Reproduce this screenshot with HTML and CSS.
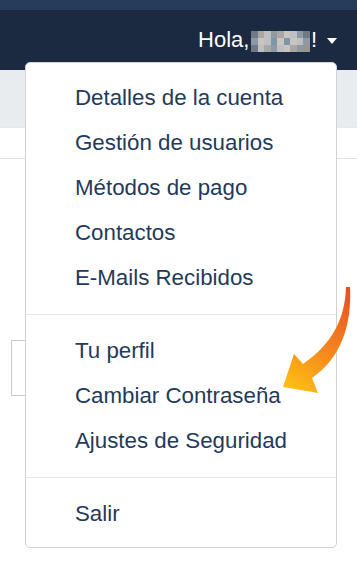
FILE: index.html
```html
<!DOCTYPE html>
<html lang="es">
<head>
<meta charset="utf-8">
<link rel="stylesheet" href="styles.css">
</head>
<body>
<div class="topstrip"></div>
<nav class="navbar">
  <div class="user">
    <span class="hola">Hola,</span>
    <span class="mosaic">
      <i class="c1"></i><i class="c2"></i><i class="c3"></i><i class="c4"></i><i class="c2"></i><i class="c5"></i><i class="c3"></i><i class="c4"></i><i class="c1"></i>
      <i class="c4"></i><i class="c5"></i><i class="c3"></i><i class="c6"></i><i class="c5"></i><i class="c6"></i><i class="c5"></i><i class="c3"></i><i class="c4"></i>
      <i class="c1"></i><i class="c3"></i><i class="c2"></i><i class="c4"></i><i class="c3"></i><i class="c5"></i><i class="c2"></i><i class="c4"></i><i class="c7"></i>
    </span>
    <span class="excl">!</span>
    <span class="caret"></span>
  </div>
</nav>
<div class="band"></div>
<div class="content">
  <div class="field"></div>
</div>

<div class="dropdown">
  <a class="item">Detalles de la cuenta</a>
  <a class="item">Gestión de usuarios</a>
  <a class="item">Métodos de pago</a>
  <a class="item">Contactos</a>
  <a class="item">E-Mails Recibidos</a>
  <div class="divider"></div>
  <a class="item">Tu perfil</a>
  <a class="item">Cambiar Contraseña</a>
  <a class="item">Ajustes de Seguridad</a>
  <div class="divider"></div>
  <a class="item">Salir</a>
</div>

<svg class="arrow" width="357" height="571" viewBox="0 0 357 571">
  <defs>
    <linearGradient id="g" x1="348" y1="288" x2="285" y2="390" gradientUnits="userSpaceOnUse">
      <stop offset="0" stop-color="#e8501f"/>
      <stop offset="0.5" stop-color="#f5821f"/>
      <stop offset="1" stop-color="#ffc312"/>
    </linearGradient>
  </defs>
  <path d="M346,287 L350,287 C352,325 341,358 312,378 L318,393 L283,387 L294,354 L303,364 C331,345 345,320 346,287 Z" fill="url(#g)"/>
</svg>
</body>
</html>
```
FILE: styles.css
```css
* { box-sizing: border-box; }
html, body { margin: 0; padding: 0; }
body {
  width: 357px;
  height: 571px;
  overflow: hidden;
  position: relative;
  background: #ffffff;
  font-family: "Liberation Sans", Arial, sans-serif;
}
.topstrip { height: 10px; background: #253d59; }
.navbar {
  height: 60px;
  background: #1b2a41;
  display: flex;
  justify-content: flex-end;
  align-items: center;
  padding-right: 20px;
}
.user {
  display: flex;
  align-items: center;
  color: #ffffff;
  font-size: 22px;
}
.hola { line-height: 24px; }
.mosaic {
  display: grid;
  grid-template-columns: repeat(9, 6.5px);
  grid-template-rows: repeat(3, 7px);
  margin: 3px 1px 0 2px;
}
.mosaic i { display: block; }
.c1 { background: #6f7a86; }
.c2 { background: #a9a6a4; }
.c3 { background: #bcc0c4; }
.c4 { background: #8f98a3; }
.c5 { background: #c9c6c2; }
.c6 { background: #7d95ab; }
.c7 { background: #9a948c; }
.excl { line-height: 24px; }
.caret {
  width: 0; height: 0;
  border-left: 5.5px solid transparent;
  border-right: 5.5px solid transparent;
  border-top: 6px solid #ffffff;
  margin-left: 10px;
  margin-top: 1px;
}
.band {
  height: 58px;
  background: #e9ecef;
  border-bottom: 1px solid #e6e8ea;
}
.content {
  border-top: 1px solid #dde1e5;
  margin-top: 30px;
  padding-top: 181px;
  padding-left: 11px;
}
.field {
  width: 200px;
  height: 56px;
  border: 1px solid #c8c8c8;
}
.dropdown {
  position: absolute;
  left: 25px;
  top: 62px;
  width: 312px;
  background: #ffffff;
  border: 1px solid #d2d2d2;
  border-radius: 5px;
  padding: 12px 0 11px;
  display: flex;
  flex-direction: column;
}
.item {
  display: block;
  height: 45px;
  line-height: 45px;
  padding-left: 49px;
  font-size: 22.3px;
  color: #1f3a5b;
  white-space: nowrap;
}
.divider {
  height: 1px;
  background: #e5e5e5;
  margin: 14px 0 13px;
}
.arrow {
  position: absolute;
  left: 0;
  top: 0;
}
```
